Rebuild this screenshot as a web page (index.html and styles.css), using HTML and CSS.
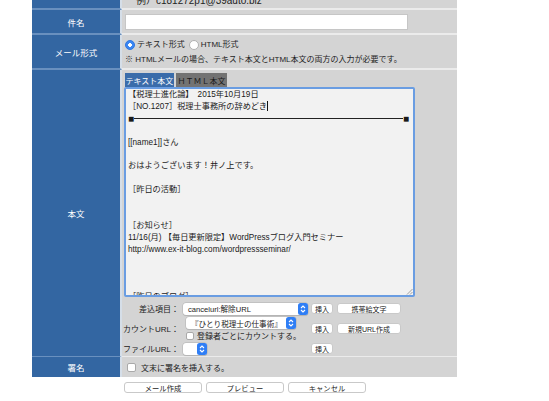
FILE: index.html
```html
<!DOCTYPE html>
<html lang="ja">
<head>
<meta charset="utf-8">
<link rel="stylesheet" href="styles.css">
</head>
<body>
<div class="page">
  <div class="form">
    <div class="row r0">
      <div class="lab"></div>
      <div class="val"><span class="example">例）c181272p1@39auto.biz</span></div>
    </div>
    <div class="row r1">
      <div class="lab">件名</div>
      <div class="val"><div class="input"></div></div>
    </div>
    <div class="row r2">
      <div class="lab">メール形式</div>
      <div class="val">
        <div class="radios">
          <span class="radio on"></span><span class="rtext">テキスト形式</span>
          <span class="radio"></span><span class="rtext">HTML形式</span>
        </div>
        <div class="note">※ HTMLメールの場合、テキスト本文とHTML本文の両方の入力が必要です。</div>
      </div>
    </div>
    <div class="row r3">
      <div class="lab">本文</div>
      <div class="val">
        <div class="tabs">
          <span class="tab active">テキスト本文</span>
          <span class="tab">ＨＴＭＬ本文</span>
        </div>
        <div class="textarea">
          <div class="ln">【税理士進化論】　2015年10月19日</div>
          <div class="ln">［NO.1207］税理士事務所の辞めどき<span class="caret"></span></div>
          <div class="ln rule"><span class="sq">■</span><span class="bar"></span><span class="sq">■</span></div>
          <div class="ln">&nbsp;</div>
          <div class="ln">[[name1]]さん</div>
          <div class="ln">&nbsp;</div>
          <div class="ln">おはようございます！井ノ上です。</div>
          <div class="ln">&nbsp;</div>
          <div class="ln">［昨日の活動］</div>
          <div class="ln">&nbsp;</div>
          <div class="ln">&nbsp;</div>
          <div class="ln">［お知らせ］</div>
          <div class="ln">11/16(月) 【毎日更新限定】WordPressブログ入門セミナー</div>
          <div class="ln">http://www.ex-it-blog.com/wordpressseminar/</div>
          <div class="ln">&nbsp;</div>
          <div class="ln">&nbsp;</div>
          <div class="ln">&nbsp;</div>
          <div class="ln">［昨日のブログ］</div>
          <svg class="grip" viewBox="0 0 7 7" width="7" height="7"><path d="M1 6.5 L6.5 1 M4 6.5 L6.5 4" stroke="#8a8a8a" stroke-width="0.8" fill="none"/></svg>
        </div>
        <div class="controls">
          <div class="clab c1">差込項目：</div>
          <div class="cmid c1">
            <div class="select s1"><span class="stext">cancelurl:解除URL</span><svg class="arr" viewBox="0 0 10 12" width="10" height="12"><rect width="10" height="12" rx="2.5" fill="#2f7ef5"/><path d="M3 5 L5 3 L7 5 M3 7 L5 9 L7 7" fill="none" stroke="#fff" stroke-width="1.1"/></svg></div>
          </div>
          <div class="cbtn c1"><span class="btn sm">挿入</span></div>
          <div class="cbtn2 c1"><span class="btn wide">携帯絵文字</span></div>

          <div class="clab c2">カウントURL：</div>
          <div class="cmid c2 stack">
            <div class="select s2"><span class="stext">『ひとり税理士の仕事術』</span><svg class="arr" viewBox="0 0 10 12" width="10" height="12"><rect width="10" height="12" rx="2.5" fill="#2f7ef5"/><path d="M3 5 L5 3 L7 5 M3 7 L5 9 L7 7" fill="none" stroke="#fff" stroke-width="1.1"/></svg></div>
            <div class="check-line"><span class="checkbox"></span><span>登録者ごとにカウントする。</span></div>
          </div>
          <div class="cbtn c2"><span class="btn sm">挿入</span></div>
          <div class="cbtn2 c2"><span class="btn wide">新規URL作成</span></div>

          <div class="clab c3">ファイルURL：</div>
          <div class="cmid c3">
            <div class="select s3"><svg class="arr" viewBox="0 0 10 12" width="10" height="12"><rect width="10" height="12" rx="2.5" fill="#2f7ef5"/><path d="M3 5 L5 3 L7 5 M3 7 L5 9 L7 7" fill="none" stroke="#fff" stroke-width="1.1"/></svg></div>
          </div>
          <div class="cbtn c3"><span class="btn sm">挿入</span></div>
          <div class="cbtn2 c3"></div>
        </div>
      </div>
    </div>
    <div class="row r4">
      <div class="lab">署名</div>
      <div class="val"><span class="checkbox"></span><span class="sigtext">文末に署名を挿入する。</span></div>
    </div>
  </div>
  <div class="actions">
    <span class="btn big">メール作成</span>
    <span class="btn big">プレビュー</span>
    <span class="btn big">キャンセル</span>
  </div>
</div>
</body>
</html>
```

FILE: styles.css
```css
* { box-sizing: border-box; margin: 0; padding: 0; }
body {
  margin: 0;
  background: #fff;
  font-family: "Liberation Sans", "Noto Sans CJK JP", sans-serif;
  font-size: 8px;
  color: #1e1e1e;
}
.page { padding-left: 32px; margin-top: -14px; }
.form { width: 425px; }
.row { display: grid; grid-template-columns: 90px 335px; }
.lab {
  background: #3366a2;
  color: #fff;
  border-right: 2px solid #d5dee8;
  border-bottom: 2px solid #6990bf;
  display: flex;
  align-items: center;
  justify-content: center;
  font-size: 8.5px;
}
.val { background: #d4d4d4; border-bottom: 2px solid #ebebeb; }

.r0 { height: 24px; }
.r0 .val { display: flex; align-items: flex-end; padding: 0 0 2px 14px; }
.example { font-size: 10px; line-height: 10px; color: #222; }

.r1 { height: 25px; }
.r1 .val { padding: 4px 0 0 3px; }
.input { width: 283px; height: 16px; background: #fff; border: 1px solid #c6c6c6; }

.r2 { height: 35px; }
.r2 .val { padding: 4px 0 0 3px; }
.radios { display: flex; align-items: center; height: 11px; }
.radio {
  width: 10px; height: 10px; border-radius: 50%;
  background: #fff; border: 1px solid #b0b0b0;
  margin-right: 2px;
}
.radio.on {
  background: #3a86f3 radial-gradient(circle, #fff 0 1.6px, transparent 2px);
  border-color: #3077e0;
}
.rtext { margin-right: 4px; line-height: 11px; }
.note { margin-top: 5px; line-height: 10px; }

.r3 { height: 287px; }
.r3 .val { padding: 3px 0 1px 2px; }
.tabs { display: flex; gap: 2px; margin-left: 1px; height: 14px; }
.tab {
  display: flex; align-items: center; justify-content: center;
  height: 14px; width: 51px;
  background: #737373; color: #1a1a1a; font-size: 8px;
  white-space: nowrap; overflow: hidden;
}
.tab.active { width: 49px; background: #3a6caa; color: #fff; }
.textarea {
  position: relative;
  width: 291px; height: 210px;
  border: 2px solid #6a9de2;
  border-radius: 2px;
  background: #f2f2f2;
  padding: 0 2px;
  overflow: hidden;
  font-size: 8.2px;
  line-height: 11.9px;
  color: #1a1a1a;
}
.ln { white-space: nowrap; height: 11.9px; }
.caret { display: inline-block; width: 1px; height: 10px; background: #111; vertical-align: -2px; }
.rule { display: flex; align-items: center; padding-right: 2px; }
.sq { font-size: 10px; line-height: 10px; }
.bar { flex: 1; height: 1px; background: #222; }
.grip { position: absolute; right: 0; bottom: 0; }

.controls {
  display: grid;
  grid-template-columns: 59px 128px 26px 64px;
  grid-template-rows: 13px 25px 13px;
  row-gap: 1px;
  margin-top: 5px;
  color: #222;
}
.clab { display: flex; align-items: center; justify-content: flex-end; padding-right: 4px; white-space: nowrap; }
.cmid { display: flex; align-items: center; }
.cmid.stack { flex-direction: column; align-items: flex-start; justify-content: flex-start; }
.cbtn, .cbtn2 { display: flex; align-items: center; }
.select {
  display: flex; align-items: center; justify-content: space-between;
  height: 12px; background: #fff; border-radius: 3px;
  box-shadow: 0 0 0 0.5px #b4b4b4, 0 0.5px 1px rgba(0,0,0,0.15);
  font-size: 7.6px;
}
.stext { padding-left: 5px; white-space: nowrap; }
.s1 { width: 125px; }
.s2 { width: 110px; margin-left: 3px; margin-top: 1px; }
.s3 { width: 24px; justify-content: flex-end; }
.arr { display: block; }
.check-line { display: flex; align-items: center; margin-left: 3px; margin-top: 1px; height: 12px; gap: 3px; }
.checkbox {
  display: inline-block; width: 8px; height: 8px;
  background: #fff; border: 1px solid #a9a9a9; border-radius: 2px;
}
.btn {
  display: flex; align-items: center; justify-content: center;
  background: #fff; border: 1px solid #c9c9c9; border-radius: 3px;
  height: 11px; font-size: 7px; color: #222;
}
.btn.sm { width: 22px; }
.btn.wide { width: 64px; }

.r4 { height: 20px; }
.r4 .val { display: flex; align-items: center; padding-left: 5px; border-bottom: none; }
.r4 .lab { border-bottom: none; }
.r4 .checkbox { width: 9px; height: 9px; }
.sigtext { margin-left: 5px; }

.actions { display: flex; gap: 4px; margin: 5px 0 0 92px; }
.btn.big { width: 78px; height: 11px; font-size: 7.3px; }
```
